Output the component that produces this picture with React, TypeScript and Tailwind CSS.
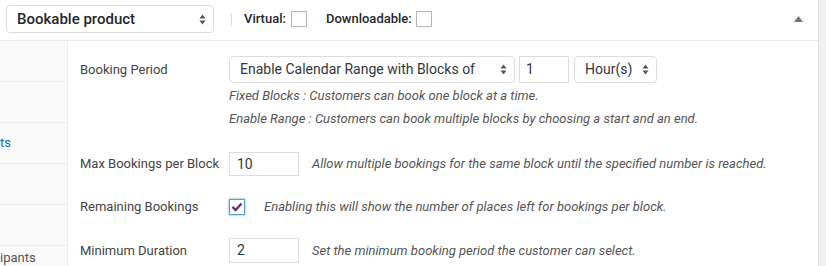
import React from "react";

function SelectArrows() {
  return (
    <svg width="7" height="11" viewBox="0 0 7 11" className="shrink-0">
      <path d="M3.5 0.5 L6.5 4.5 L0.5 4.5 Z" fill="#555" />
      <path d="M3.5 10.5 L6.5 6.5 L0.5 6.5 Z" fill="#555" />
    </svg>
  );
}

function Checkbox({ checked, focused }: { checked?: boolean; focused?: boolean }) {
  return (
    <span
      className={
        "flex h-[16px] w-[16px] shrink-0 items-center justify-center bg-white " +
        (focused
          ? "border border-[#5b9dd9] shadow-[0_0_2px_rgba(30,140,190,0.8)]"
          : "border border-[#b4b9be] shadow-[inset_0_1px_2px_rgba(0,0,0,0.07)]")
      }
    >
      {checked && (
        <svg width="12" height="10" viewBox="0 0 12 10">
          <path d="M1.5 4.8 L4.6 8 L10.5 1.5" fill="none" stroke="#6b2e7e" strokeWidth="2.4" />
        </svg>
      )}
    </span>
  );
}

export default function App() {
  return (
    <div
      className="flex h-[266px] w-[826px] overflow-hidden bg-white text-[#444]"
      style={{ fontFamily: "Roboto, 'Noto Sans', sans-serif" }}
    >
      <div className="flex w-[818px] flex-col">
        {/* product type bar */}
        <div className="flex h-[41px] shrink-0 items-center border-b border-[#eee] pb-[6px]">
          <div className="ml-[6px] mt-[4px] flex h-[28px] w-[208px] items-center justify-between rounded-[4px] border border-[#ddd] pl-[10px] pr-[7px]">
            <span className="text-[15px] font-medium text-[#23282d]">Bookable product</span>
            <SelectArrows />
          </div>
          <span className="ml-[17px] mt-[4px] h-[13px] w-px bg-[#ddd]" />
          <div className="ml-[12px] mt-[4px] flex items-center gap-[5px] text-[13px] font-medium text-[#23282d]">
            Virtual:
            <Checkbox />
          </div>
          <div className="ml-[19px] mt-[4px] flex items-center gap-[4px] text-[13px] font-medium text-[#23282d]">
            Downloadable:
            <Checkbox />
          </div>
          <svg width="9" height="6" viewBox="0 0 9 6" className="ml-auto mr-[15px] mt-[4px]">
            <path d="M4.5 0 L9 6 L0 6 Z" fill="#72777c" />
          </svg>
        </div>

        <div className="flex flex-1">
          {/* tabs */}
          <div className="w-[68px] shrink-0 overflow-hidden border-r border-[#eee] bg-[#fafafa] text-[13px]">
            <div className="h-[41px] border-b border-[#eee]" />
            <div className="h-[41px] border-b border-[#eee]" />
            <div className="flex h-[41px] items-center border-b border-[#eee] text-[#0073aa]">ts</div>
            <div className="h-[41px] border-b border-[#eee]" />
            <div className="h-[41px] border-b border-[#eee]" />
            <div className="pt-[5px] leading-[14px] text-[#555]">ipants</div>
          </div>

          {/* fields */}
          <div className="flex-1 pl-[12px] text-[13px]">
            <div className="mt-[15px] flex h-[27px] items-center">
              <span className="w-[149px] shrink-0">Booking Period</span>
              <div className="flex h-[27px] w-[286px] items-center justify-between rounded-[4px] border border-[#ddd] pl-[10px] pr-[7px] text-[14px] text-[#32373c]">
                Enable Calendar Range with Blocks of
                <SelectArrows />
              </div>
              <div className="ml-[4px] flex h-[27px] w-[50px] items-center border border-[#ddd] pl-[6px] text-[14px] text-[#32373c]">
                1
              </div>
              <div className="ml-[5px] flex h-[27px] w-[83px] items-center justify-between rounded-[4px] border border-[#ddd] pl-[10px] pr-[7px] text-[14px] text-[#32373c]">
                Hour(s)
                <SelectArrows />
              </div>
            </div>
            <p className="ml-[149px] mt-[5px] text-[13px] italic leading-[16px] text-[#555]">
              Fixed Blocks : Customers can book one block at a time.
            </p>
            <p className="ml-[149px] mt-[7px] text-[13px] italic leading-[16px] text-[#555]">
              Enable Range : Customers can book multiple blocks by choosing a start and an end.
            </p>

            <div className="mt-[25px] flex h-[24px] items-center">
              <span className="w-[149px] shrink-0">Max Bookings per Block</span>
              <div className="flex h-[24px] w-[70px] items-center border border-[#ddd] pl-[7px] text-[14px] text-[#32373c]">
                10
              </div>
              <span className="ml-[13px] text-[13px] italic text-[#555]">
                Allow multiple bookings for the same block until the specified number is reached.
              </span>
            </div>

            <div className="mt-[23px] flex h-[16px] items-center">
              <span className="w-[149px] shrink-0">Remaining Bookings</span>
              <Checkbox checked focused />
              <span className="ml-[19px] text-[13px] italic text-[#555]">
                Enabling this will show the number of places left for bookings per block.
              </span>
            </div>

            <div className="mt-[23px] flex h-[25px] items-center">
              <span className="w-[149px] shrink-0">Minimum Duration</span>
              <div className="flex h-[25px] w-[70px] items-center border border-[#ddd] pl-[7px] text-[14px] text-[#32373c]">
                2
              </div>
              <span className="ml-[13px] text-[13px] italic text-[#555]">
                Set the minimum booking period the customer can select.
              </span>
            </div>
          </div>
        </div>
      </div>
      <div className="w-[8px] shrink-0 border-l border-[#ddd] bg-[#f1f1f1]" />
    </div>
  );
}
